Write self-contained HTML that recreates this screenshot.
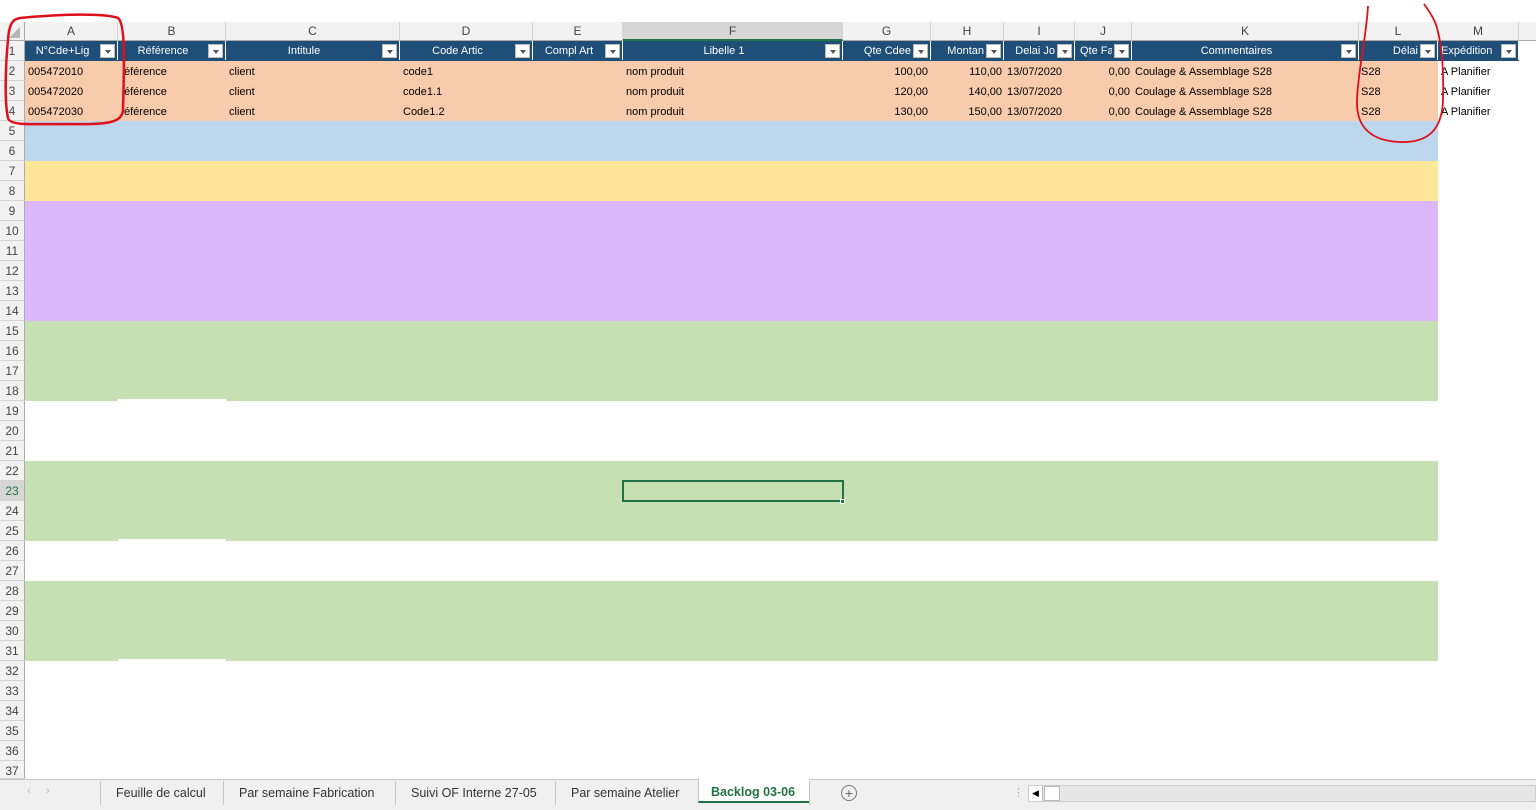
<!DOCTYPE html>
<html><head><meta charset="utf-8">
<style>
*{margin:0;padding:0;box-sizing:border-box}
html,body{width:1536px;height:810px;overflow:hidden}
body{background:#fff;font-family:"Liberation Sans",sans-serif;position:relative}
.a{position:absolute}
.ch{position:absolute;top:22px;height:19px;background:#f2f2f2;border-right:1px solid #d4d4d4;border-bottom:1px solid #ababab;font-size:12px;color:#444;text-align:center;line-height:19px}
.rh{position:absolute;left:0;width:25px;height:20px;background:#f2f2f2;border-bottom:1px solid #d4d4d4;border-right:1px solid #ababab;font-size:12px;color:#444;text-align:center;line-height:20px}
.hd{position:absolute;top:41px;height:20px;background:#1f4e78;color:#fff;font-size:11px;line-height:21px;border-right:1px solid #fff;overflow:hidden;white-space:nowrap}
.hd span{position:absolute;left:2px;right:19px;text-align:center;overflow:hidden}
.hd i{position:absolute;right:2px;top:3px;width:15px;height:14px;background:#fff;border:1px solid #bbb}
.hd i:after{content:"";position:absolute;left:4px;top:5px;border-left:3px solid transparent;border-right:3px solid transparent;border-top:4px solid #555}
.t{position:absolute;font-size:11px;color:#000;line-height:22px;white-space:nowrap}
.band{position:absolute;left:25px;width:1413px}
.tab{position:absolute;top:781px;height:24px;line-height:24px;font-size:12.5px;color:#333;border-left:1px solid #c6c6c6;padding:0 15px}
</style></head><body>
<div class="a" style="left:0;top:22px;width:25px;height:19px;background:#f2f2f2;border-right:1px solid #ababab;border-bottom:1px solid #ababab"></div>
<div class="a" style="left:9px;top:27px;width:0;height:0;border-left:11px solid transparent;border-bottom:11px solid #b5b5b5"></div>
<div class="ch" style="left:25px;width:93px">A</div>
<div class="ch" style="left:118px;width:108px">B</div>
<div class="ch" style="left:226px;width:174px">C</div>
<div class="ch" style="left:400px;width:133px">D</div>
<div class="ch" style="left:533px;width:90px">E</div>
<div class="ch" style="left:623px;width:220px;background:#d6d6d6;border-bottom:2px solid #217346">F</div>
<div class="ch" style="left:843px;width:88px">G</div>
<div class="ch" style="left:931px;width:73px">H</div>
<div class="ch" style="left:1004px;width:71px">I</div>
<div class="ch" style="left:1075px;width:57px">J</div>
<div class="ch" style="left:1132px;width:227px">K</div>
<div class="ch" style="left:1359px;width:79px">L</div>
<div class="ch" style="left:1438px;width:81px">M</div>
<div class="ch" style="left:1519px;width:17px;border-right:none"></div>
<div class="band" style="top:61px;height:60px;background:#f8cbad"></div>
<div class="band" style="top:121px;height:40px;background:#bdd7ee"></div>
<div class="band" style="top:161px;height:40px;background:#ffe699"></div>
<div class="band" style="top:201px;height:120px;background:#dbb8fb"></div>
<div class="band" style="top:321px;height:80px;background:#c6e0b4"></div>
<div class="band" style="top:461px;height:80px;background:#c6e0b4"></div>
<div class="band" style="top:581px;height:80px;background:#c6e0b4"></div>
<div class="a" style="left:118px;top:399px;width:108px;height:2px;background:#fff"></div>
<div class="a" style="left:118px;top:539px;width:108px;height:2px;background:#fff"></div>
<div class="a" style="left:118px;top:659px;width:108px;height:2px;background:#fff"></div>
<div class="hd" style="left:25px;width:93px"><span>N°Cde+Lig</span><i></i></div>
<div class="hd" style="left:118px;width:108px"><span>Référence</span><i></i></div>
<div class="hd" style="left:226px;width:174px"><span>Intitule</span><i></i></div>
<div class="hd" style="left:400px;width:133px"><span>Code Artic</span><i></i></div>
<div class="hd" style="left:533px;width:90px"><span>Compl Art</span><i></i></div>
<div class="hd" style="left:623px;width:220px"><span>Libelle 1</span><i></i></div>
<div class="hd" style="left:843px;width:88px"><span style="text-align:right">Qte Cdee</span><i></i></div>
<div class="hd" style="left:931px;width:73px"><span style="text-align:right">Montan</span><i></i></div>
<div class="hd" style="left:1004px;width:71px"><span style="text-align:right">Delai Jo</span><i></i></div>
<div class="hd" style="left:1075px;width:57px"><span style="text-align:left;left:5px">Qte Fa</span><i></i></div>
<div class="hd" style="left:1132px;width:227px"><span>Commentaires</span><i></i></div>
<div class="hd" style="left:1359px;width:79px"><span style="text-align:right">Délai</span><i></i></div>
<div class="hd" style="left:1438px;width:81px"><span style="left:3px;text-align:left">Expédition</span><i></i></div>
<div class="a" style="left:25px;top:60px;width:1494px;height:1px;background:#1f4e78"></div>
<div class="a" style="left:0;top:61px;width:1536px;height:60px">
<div class="t" style="left:28px;top:0">005472010</div><div class="t" style="left:28px;top:20px">005472020</div><div class="t" style="left:28px;top:40px">005472030</div>
<div class="t" style="left:124px;top:0">éférence</div><div class="t" style="left:124px;top:20px">éférence</div><div class="t" style="left:124px;top:40px">éférence</div>
<div class="t" style="left:229px;top:0">client</div><div class="t" style="left:229px;top:20px">client</div><div class="t" style="left:229px;top:40px">client</div>
<div class="t" style="left:403px;top:0">code1</div><div class="t" style="left:403px;top:20px">code1.1</div><div class="t" style="left:403px;top:40px">Code1.2</div>
<div class="t" style="left:626px;top:0">nom produit</div><div class="t" style="left:626px;top:20px">nom produit</div><div class="t" style="left:626px;top:40px">nom produit</div>
<div class="t" style="right:608px;top:0">100,00</div><div class="t" style="right:608px;top:20px">120,00</div><div class="t" style="right:608px;top:40px">130,00</div>
<div class="t" style="right:534px;top:0">110,00</div><div class="t" style="right:534px;top:20px">140,00</div><div class="t" style="right:534px;top:40px">150,00</div>
<div class="t" style="left:1007px;top:0">13/07/2020</div><div class="t" style="left:1007px;top:20px">13/07/2020</div><div class="t" style="left:1007px;top:40px">13/07/2020</div>
<div class="t" style="right:406px;top:0">0,00</div><div class="t" style="right:406px;top:20px">0,00</div><div class="t" style="right:406px;top:40px">0,00</div>
<div class="t" style="left:1135px;top:0">Coulage &amp; Assemblage S28</div><div class="t" style="left:1135px;top:20px">Coulage &amp; Assemblage S28</div><div class="t" style="left:1135px;top:40px">Coulage &amp; Assemblage S28</div>
<div class="t" style="left:1361px;top:0">S28</div><div class="t" style="left:1361px;top:20px">S28</div><div class="t" style="left:1361px;top:40px">S28</div>
<div class="t" style="left:1441px;top:0">A Planifier</div><div class="t" style="left:1441px;top:20px">A Planifier</div><div class="t" style="left:1441px;top:40px">A Planifier</div>
</div>
<div class="a" style="left:622px;top:480px;width:222px;height:22px;border:2px solid #217346"></div>
<div class="a" style="left:840px;top:499px;width:5px;height:5px;background:#217346;border:1px solid #fff"></div>
<div class="rh" style="top:41px">1</div><div class="rh" style="top:61px">2</div><div class="rh" style="top:81px">3</div><div class="rh" style="top:101px">4</div><div class="rh" style="top:121px">5</div><div class="rh" style="top:141px">6</div><div class="rh" style="top:161px">7</div><div class="rh" style="top:181px">8</div><div class="rh" style="top:201px">9</div><div class="rh" style="top:221px">10</div><div class="rh" style="top:241px">11</div><div class="rh" style="top:261px">12</div><div class="rh" style="top:281px">13</div><div class="rh" style="top:301px">14</div><div class="rh" style="top:321px">15</div><div class="rh" style="top:341px">16</div><div class="rh" style="top:361px">17</div><div class="rh" style="top:381px">18</div><div class="rh" style="top:401px">19</div><div class="rh" style="top:421px">20</div><div class="rh" style="top:441px">21</div><div class="rh" style="top:461px">22</div><div class="rh" style="top:481px;background:#d6d6d6;color:#217346">23</div><div class="rh" style="top:501px">24</div><div class="rh" style="top:521px">25</div><div class="rh" style="top:541px">26</div><div class="rh" style="top:561px">27</div><div class="rh" style="top:581px">28</div><div class="rh" style="top:601px">29</div><div class="rh" style="top:621px">30</div><div class="rh" style="top:641px">31</div><div class="rh" style="top:661px">32</div><div class="rh" style="top:681px">33</div><div class="rh" style="top:701px">34</div><div class="rh" style="top:721px">35</div><div class="rh" style="top:741px">36</div><div class="rh" style="top:761px;height:18px">37</div>
<div class="a" style="left:0;top:779px;width:1536px;height:31px;background:#f0f0f0;border-top:1px solid #c6c6c6"></div>
<div class="a" style="left:27px;top:785px;font-size:11px;color:#bbb">‹&nbsp;&nbsp;&nbsp;&nbsp;&nbsp;›</div>
<div class="tab" style="left:100px">Feuille de calcul</div>
<div class="tab" style="left:223px">Par semaine Fabrication</div>
<div class="tab" style="left:395px">Suivi OF Interne 27-05</div>
<div class="tab" style="left:555px">Par semaine Atelier</div>
<div class="tab" style="left:698px;top:779px;height:24px;background:#fff;color:#217346;font-weight:bold;border-bottom:2px solid #217346;padding:0 12px;width:111px;line-height:26px">Backlog 03-06</div>
<div class="a" style="left:809px;top:781px;height:24px;border-left:1px solid #c6c6c6"></div>
<div class="a" style="left:841px;top:785px;width:16px;height:16px;border:1px solid #777;border-radius:50%;text-align:center;line-height:14px;font-size:14px;color:#666">+</div>
<div class="a" style="left:1013px;top:786px;color:#aaa;font-size:11px">⋮</div>
<div class="a" style="left:1028px;top:785px;width:508px;height:17px;background:#e6e6e6;border:1px solid #ccc"></div>
<div class="a" style="left:1029px;top:786px;width:14px;height:15px;background:#fff;border-right:1px solid #bbb;font-size:9px;text-align:center;line-height:15px">◀</div>
<div class="a" style="left:1044px;top:786px;width:16px;height:15px;background:#fff;border:1px solid #bbb"></div>
<svg class="a" style="left:0;top:0" width="1536" height="810">
<path d="M20 18 C60 14 105 13 118 18 C126 24 124 70 123 110 C122 122 110 125 70 124 C30 124 10 126 8 118 C4 100 6 60 8 40 C9 25 12 19 20 18" fill="none" stroke="#e0101a" stroke-width="2.5"/>
<path d="M1368 6 C1366 40 1358 70 1357 100 C1356 128 1372 141 1400 142 C1428 143 1442 130 1443 100 C1444 65 1441 35 1434 20 C1430 12 1427 8 1424 4" fill="none" stroke="#e0101a" stroke-width="1.8"/>
</svg>
</body></html>
